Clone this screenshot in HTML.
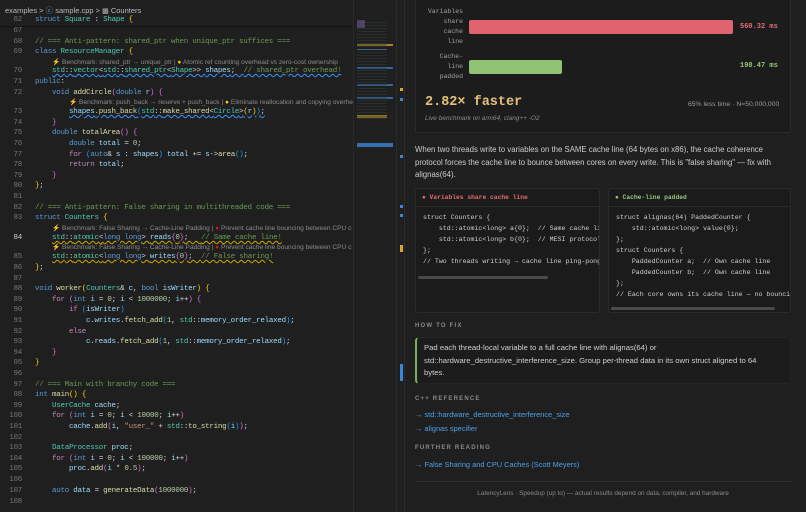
<!DOCTYPE html>
<html><head><meta charset="utf-8"><style>
*{margin:0;padding:0;box-sizing:border-box}
body{width:806px;height:512px;background:#1f1f1f;overflow:hidden;position:relative;font-family:"Liberation Sans",sans-serif}
.ed{position:absolute;left:0;top:0;width:404px;height:512px;background:#1f1f1f}
.ln{position:absolute;left:0;height:12px;line-height:12px;white-space:pre;font-family:"Liberation Mono",monospace;font-size:7.5px;letter-spacing:-0.25px;color:#d4d4d4}
.ln .no{position:absolute;left:0;width:22px;text-align:right;color:#6e7681}
.ln .cd{position:absolute;left:35px}
.lens{position:absolute;height:9px;line-height:9px;font-size:6.6px;color:#8b8b8b;white-space:pre}
.k{color:#569cd6}.t{color:#4ec9b0}.f{color:#dcdcaa}.v{color:#9cdcfe}.c{color:#6a9955}.p{color:#c586c0}.n{color:#b5cea8}.s{color:#ce9178}.b1{color:#ffd700}.b2{color:#da70d6}.b3{color:#179fff}
.wb{text-decoration:underline wavy #3794ff;text-decoration-thickness:1px;text-underline-offset:1px}
.wy{text-decoration:underline wavy #cca700;text-decoration-thickness:1px;text-underline-offset:1px}
.rp{position:absolute;left:404px;top:0;width:402px;height:512px;background:#1f1f1f;border-left:1px solid #2b2b2b}
.mono{font-family:"Liberation Mono",monospace}
.lab{position:absolute;width:60px;text-align:right;font-family:"Liberation Mono",monospace;font-size:6.5px;color:#a0a0a0;line-height:10px}
.box{position:absolute;background:#1b1b1b;border:1px solid #2a2a2a;border-radius:3px;overflow:hidden}
.box .h{height:18px;line-height:18px;padding-left:6px;font-family:"Liberation Mono",monospace;font-size:6.3px;font-weight:bold;border-bottom:1px solid #2a2a2a}
.box pre{font-family:"Liberation Mono",monospace;font-size:6.6px;color:#d0d0d0;line-height:11px;padding:5px 0 0 7px;white-space:pre}
.sec{position:absolute;left:415px;font-size:6px;font-weight:bold;letter-spacing:1.2px;color:#8a8a8a}
.lk{position:absolute;left:415px;font-size:7.4px;color:#4fa0e6}
</style></head><body>
<div class="ed">
<div style="position:absolute;left:5px;top:5px;font-size:7.5px;color:#bbb;white-space:pre">examples &gt; <span style="color:#5aa0d8">ⓒ</span> sample.cpp &gt; <span style="font-size:7px">▦</span> Counters</div>
<div style="position:absolute;left:0;top:26px;width:352px;height:2px;background:linear-gradient(#111,#1f1f1f)"></div>
<div class="ln" style="top:14px"><span class="no">62</span><span class="cd"><span class="k">struct</span> <span class="t">Square</span> : <span class="t">Shape</span> <span class="b1">{</span></span></div>
<div class="ln" style="top:25px"><span class="no">67</span></div>
<div class="ln" style="top:36px"><span class="no">68</span><span class="cd c">// === Anti-pattern: shared_ptr when unique_ptr suffices ===</span></div>
<div class="ln" style="top:46px"><span class="no">69</span><span class="cd"><span class="k">class</span> <span class="t">ResourceManager</span> <span class="b1">{</span></span></div>
<div class="lens" style="left:52px;top:58px"><span style="color:#e5c07b">⚡</span> Benchmark: shared_ptr → unique_ptr | <span style="color:#f5c518">●</span> Atomic ref counting overhead vs zero-cost ownership</div>
<div class="ln" style="top:65px"><span class="no">70</span><span class="cd">    <span class="wb"><span class="t">std</span>::<span class="t">vector</span>&lt;<span class="t">std</span>::<span class="t">shared_ptr</span>&lt;<span class="t">Shape</span>&gt;&gt; <span class="v">shapes</span>;  <span class="c">// shared_ptr overhead!</span></span></span></div>
<div class="ln" style="top:76px"><span class="no">71</span><span class="cd"><span class="k">public</span>:</span></div>
<div class="ln" style="top:87px"><span class="no">72</span><span class="cd">    <span class="k">void</span> <span class="f">addCircle</span><span class="b2">(</span><span class="k">double</span> <span class="v">r</span><span class="b2">)</span> <span class="b2">{</span></span></div>
<div class="lens" style="left:69px;top:98px"><span style="color:#e5c07b">⚡</span> Benchmark: push_back → reserve + push_back | <span style="color:#f5c518">●</span> Eliminate reallocation and copying overhead</div>
<div class="ln" style="top:106px"><span class="no">73</span><span class="cd">        <span class="wb"><span class="v">shapes</span>.<span class="f">push_back</span><span class="b3">(</span><span class="t">std</span>::<span class="f">make_shared</span>&lt;<span class="t">Circle</span>&gt;<span class="b1">(</span><span class="v">r</span><span class="b1">)</span><span class="b3">)</span>;</span></span></div>
<div class="ln" style="top:117px"><span class="no">74</span><span class="cd">    <span class="b2">}</span></span></div>
<div class="ln" style="top:127px"><span class="no">75</span><span class="cd">    <span class="k">double</span> <span class="f">totalArea</span><span class="b2">()</span> <span class="b2">{</span></span></div>
<div class="ln" style="top:138px"><span class="no">76</span><span class="cd">        <span class="k">double</span> <span class="v">total</span> = <span class="n">0</span>;</span></div>
<div class="ln" style="top:149px"><span class="no">77</span><span class="cd">        <span class="p">for</span> <span class="b3">(</span><span class="k">auto</span>&amp; <span class="v">s</span> : <span class="v">shapes</span><span class="b3">)</span> <span class="v">total</span> += <span class="v">s</span>-&gt;<span class="f">area</span><span class="b3">()</span>;</span></div>
<div class="ln" style="top:159px"><span class="no">78</span><span class="cd">        <span class="p">return</span> <span class="v">total</span>;</span></div>
<div class="ln" style="top:170px"><span class="no">79</span><span class="cd">    <span class="b2">}</span></span></div>
<div class="ln" style="top:180px"><span class="no">80</span><span class="cd"><span class="b1">}</span>;</span></div>
<div class="ln" style="top:191px"><span class="no">81</span></div>
<div class="ln" style="top:202px"><span class="no">82</span><span class="cd c">// === Anti-pattern: False sharing in multithreaded code ===</span></div>
<div class="ln" style="top:212px"><span class="no">83</span><span class="cd"><span class="k">struct</span> <span class="t">Counters</span> <span class="b1">{</span></span></div>
<div class="lens" style="left:52px;top:224px;width:300px;overflow:hidden"><span style="color:#e5c07b">⚡</span> Benchmark: False Sharing → Cache-Line Padding | <span style="color:#e51400">●</span> Prevent cache line bouncing between CPU cores</div>
<div class="ln" style="top:232px"><span class="no" style="color:#ccc">84</span><span class="cd">    <span class="wy"><span class="t">std</span>::<span class="t">atomic</span>&lt;<span class="k">long long</span>&gt; <span class="v">reads</span><span class="b2">{</span><span class="n">0</span><span class="b2">}</span>;   <span class="c">// Same cache line!</span></span></span></div>
<div class="lens" style="left:52px;top:243px;width:300px;overflow:hidden"><span style="color:#e5c07b">⚡</span> Benchmark: False Sharing → Cache-Line Padding | <span style="color:#e51400">●</span> Prevent cache line bouncing between CPU cores</div>
<div class="ln" style="top:251px"><span class="no">85</span><span class="cd">    <span class="wy"><span class="t">std</span>::<span class="t">atomic</span>&lt;<span class="k">long long</span>&gt; <span class="v">writes</span><span class="b2">{</span><span class="n">0</span><span class="b2">}</span>;  <span class="c">// False sharing!</span></span></span></div>
<div class="ln" style="top:262px"><span class="no">86</span><span class="cd"><span class="b1">}</span>;</span></div>
<div class="ln" style="top:273px"><span class="no">87</span></div>
<div class="ln" style="top:283px"><span class="no">88</span><span class="cd"><span class="k">void</span> <span class="f">worker</span><span class="b1">(</span><span class="t">Counters</span>&amp; <span class="v">c</span>, <span class="k">bool</span> <span class="v">isWriter</span><span class="b1">)</span> <span class="b1">{</span></span></div>
<div class="ln" style="top:294px"><span class="no">89</span><span class="cd">    <span class="p">for</span> <span class="b2">(</span><span class="k">int</span> <span class="v">i</span> = <span class="n">0</span>; <span class="v">i</span> &lt; <span class="n">1000000</span>; <span class="v">i</span>++<span class="b2">)</span> <span class="b2">{</span></span></div>
<div class="ln" style="top:304px"><span class="no">90</span><span class="cd">        <span class="p">if</span> <span class="b3">(</span><span class="v">isWriter</span><span class="b3">)</span></span></div>
<div class="ln" style="top:315px"><span class="no">91</span><span class="cd">            <span class="v">c</span>.<span class="v">writes</span>.<span class="f">fetch_add</span><span class="b3">(</span><span class="n">1</span>, <span class="t">std</span>::<span class="v">memory_order_relaxed</span><span class="b3">)</span>;</span></div>
<div class="ln" style="top:326px"><span class="no">92</span><span class="cd">        <span class="p">else</span></span></div>
<div class="ln" style="top:336px"><span class="no">93</span><span class="cd">            <span class="v">c</span>.<span class="v">reads</span>.<span class="f">fetch_add</span><span class="b3">(</span><span class="n">1</span>, <span class="t">std</span>::<span class="v">memory_order_relaxed</span><span class="b3">)</span>;</span></div>
<div class="ln" style="top:347px"><span class="no">94</span><span class="cd">    <span class="b2">}</span></span></div>
<div class="ln" style="top:357px"><span class="no">95</span><span class="cd"><span class="b1">}</span></span></div>
<div class="ln" style="top:368px"><span class="no">96</span></div>
<div class="ln" style="top:379px"><span class="no">97</span><span class="cd c">// === Main with branchy code ===</span></div>
<div class="ln" style="top:389px"><span class="no">98</span><span class="cd"><span class="k">int</span> <span class="f">main</span><span class="b1">()</span> <span class="b1">{</span></span></div>
<div class="ln" style="top:400px"><span class="no">99</span><span class="cd">    <span class="t">UserCache</span> <span class="v">cache</span>;</span></div>
<div class="ln" style="top:410px"><span class="no">100</span><span class="cd">    <span class="p">for</span> <span class="b2">(</span><span class="k">int</span> <span class="v">i</span> = <span class="n">0</span>; <span class="v">i</span> &lt; <span class="n">10000</span>; <span class="v">i</span>++<span class="b2">)</span></span></div>
<div class="ln" style="top:421px"><span class="no">101</span><span class="cd">        <span class="v">cache</span>.<span class="f">add</span><span class="b2">(</span><span class="v">i</span>, <span class="s">"user_"</span> + <span class="t">std</span>::<span class="f">to_string</span><span class="b3">(</span><span class="v">i</span><span class="b3">)</span><span class="b2">)</span>;</span></div>
<div class="ln" style="top:432px"><span class="no">102</span></div>
<div class="ln" style="top:442px"><span class="no">103</span><span class="cd">    <span class="t">DataProcessor</span> <span class="v">proc</span>;</span></div>
<div class="ln" style="top:453px"><span class="no">104</span><span class="cd">    <span class="p">for</span> <span class="b2">(</span><span class="k">int</span> <span class="v">i</span> = <span class="n">0</span>; <span class="v">i</span> &lt; <span class="n">100000</span>; <span class="v">i</span>++<span class="b2">)</span></span></div>
<div class="ln" style="top:463px"><span class="no">105</span><span class="cd">        <span class="v">proc</span>.<span class="f">add</span><span class="b2">(</span><span class="v">i</span> * <span class="n">0.5</span><span class="b2">)</span>;</span></div>
<div class="ln" style="top:474px"><span class="no">106</span></div>
<div class="ln" style="top:485px"><span class="no">107</span><span class="cd">    <span class="k">auto</span> <span class="v">data</span> = <span class="f">generateData</span><span class="b2">(</span><span class="n">1000000</span><span class="b2">)</span>;</span></div>
<div class="ln" style="top:496px"><span class="no">108</span></div>
<div style="position:absolute;left:353px;top:0;width:51px;height:512px;background:#1f1f1f;border-left:1px solid #2a2a2a"></div>
<div style="position:absolute;left:357px;top:17px;width:36px;height:130px;opacity:.8">
<div style="position:absolute;left:0;top:3px;width:8px;height:8px;background:#7a5a9a"></div>
<div style="position:absolute;left:0;top:27px;width:36px;height:2px;background:#c9a227"></div>
<div style="position:absolute;left:0;top:32px;width:30px;height:1px;background:#4a86c8"></div>
<div style="position:absolute;left:0;top:50px;width:36px;height:2px;background:#3c78c0"></div>
<div style="position:absolute;left:0;top:67px;width:36px;height:2px;background:#3c78c0"></div>
<div style="position:absolute;left:0;top:80px;width:36px;height:2px;background:#3c78c0"></div>
<div style="position:absolute;left:0;top:98px;width:30px;height:3px;background:#c9a227"></div>
<div style="position:absolute;left:0;top:126px;width:36px;height:4px;background:#3c84d8"></div>
</div>
<div style="position:absolute;left:357px;top:20px;width:30px;height:100px;background:repeating-linear-gradient(#1f1f1f 0 2px,#3a4a4a 2px 3px);opacity:.35"></div>
<div style="position:absolute;left:396px;top:0;width:1px;height:512px;background:#2a2a2a"></div>
<div style="position:absolute;left:400px;top:88px;width:3px;height:3px;background:#d7a82a"></div>
<div style="position:absolute;left:400px;top:98px;width:3px;height:3px;background:#3c84d8"></div>
<div style="position:absolute;left:400px;top:155px;width:3px;height:3px;background:#3c84d8"></div>
<div style="position:absolute;left:400px;top:205px;width:3px;height:3px;background:#3c84d8"></div>
<div style="position:absolute;left:400px;top:214px;width:3px;height:3px;background:#3c84d8"></div>
<div style="position:absolute;left:400px;top:245px;width:3px;height:7px;background:#d7a82a"></div>
<div style="position:absolute;left:400px;top:364px;width:3px;height:17px;background:#3c84d8"></div>
</div>
<div class="rp"></div>
<div class="box" style="left:415px;top:-4px;width:376px;height:137px;background:#1c1c1c"></div>
<div class="lab" style="left:403px;top:7px">Variables<br>share<br>cache<br>line</div>
<div style="position:absolute;left:469px;top:20px;width:264px;height:14px;background:#e0646f;border-radius:2px"></div>
<div class="mono" style="position:absolute;left:740px;top:23px;font-size:7px;color:#e06c75;font-weight:bold">560.32 ms</div>
<div class="lab" style="left:403px;top:52px">Cache-<br>line<br>padded</div>
<div style="position:absolute;left:469px;top:60px;width:93px;height:14px;background:#8fc273;border-radius:2px"></div>
<div class="mono" style="position:absolute;left:740px;top:62px;font-size:7px;color:#98c379;font-weight:bold">198.47 ms</div>
<div class="mono" style="position:absolute;left:425px;top:95px;font-size:13.5px;font-weight:bold;color:#e5c07b">2.82× faster</div>
<div style="position:absolute;left:688px;top:101px;font-size:6.8px;color:#9a9a9a;white-space:nowrap">65% less time · N=50,000,000</div>
<div style="position:absolute;left:425px;top:115px;font-size:6.5px;color:#8a8a8a;font-style:italic">Live benchmark on arm64, clang++ -O2</div>
<div style="position:absolute;left:415px;top:144px;width:376px;font-size:7.8px;line-height:12.5px;color:#cccccc">When two threads write to variables on the SAME cache line (64 bytes on x86), the cache coherence protocol forces the cache line to bounce between cores on every write. This is "false sharing" — fix with alignas(64).</div>
<div class="box" style="left:415px;top:188px;width:185px;height:125px">
<div class="h" style="color:#e06c75">● Variables share cache line</div>
<pre>struct Counters {
    std::atomic&lt;long&gt; a{0};  // Same cache line
    std::atomic&lt;long&gt; b{0};  // MESI protocol
};
// Two threads writing → cache line ping-pong</pre>
<div style="position:absolute;left:2px;top:87px;width:130px;height:3px;background:#4a4a4a;border-radius:2px"></div>
</div>
<div class="box" style="left:608px;top:188px;width:183px;height:125px">
<div class="h" style="color:#98c379">● Cache-line padded</div>
<pre>struct alignas(64) PaddedCounter {
    std::atomic&lt;long&gt; value{0};
};
struct Counters {
    PaddedCounter a;  // Own cache line
    PaddedCounter b;  // Own cache line
};
// Each core owns its cache line — no bouncing</pre>
<div style="position:absolute;left:2px;top:118px;width:164px;height:3px;background:#4a4a4a;border-radius:2px"></div>
</div>
<div class="sec" style="top:323px">HOW TO FIX</div>
<div style="position:absolute;left:415px;top:337px;width:376px;height:47px;background:#1c1c1c;border:1px solid #252525;border-left:2px solid #7fae5f;border-radius:4px"></div>
<div style="position:absolute;left:424px;top:342px;width:342px;font-size:7.7px;line-height:12.5px;color:#d0d0d0">Pad each thread-local variable to a full cache line with alignas(64) or std::hardware_destructive_interference_size. Group per-thread data in its own struct aligned to 64 bytes.</div>
<div class="sec" style="top:396px">C++ REFERENCE</div>
<div class="lk" style="top:410px">→ std::hardware_destructive_interference_size</div>
<div class="lk" style="top:424px">→ alignas specifier</div>
<div class="sec" style="top:445px">FURTHER READING</div>
<div class="lk" style="top:460px">→ False Sharing and CPU Caches (Scott Meyers)</div>
<div style="position:absolute;left:415px;top:481px;width:376px;height:1px;background:#2e2e2e"></div>
<div style="position:absolute;left:415px;top:490px;width:376px;text-align:center;font-size:6.4px;color:#8a8a8a">LatencyLens · Speedup (up to) — actual results depend on data, compiler, and hardware</div>
</body></html>
